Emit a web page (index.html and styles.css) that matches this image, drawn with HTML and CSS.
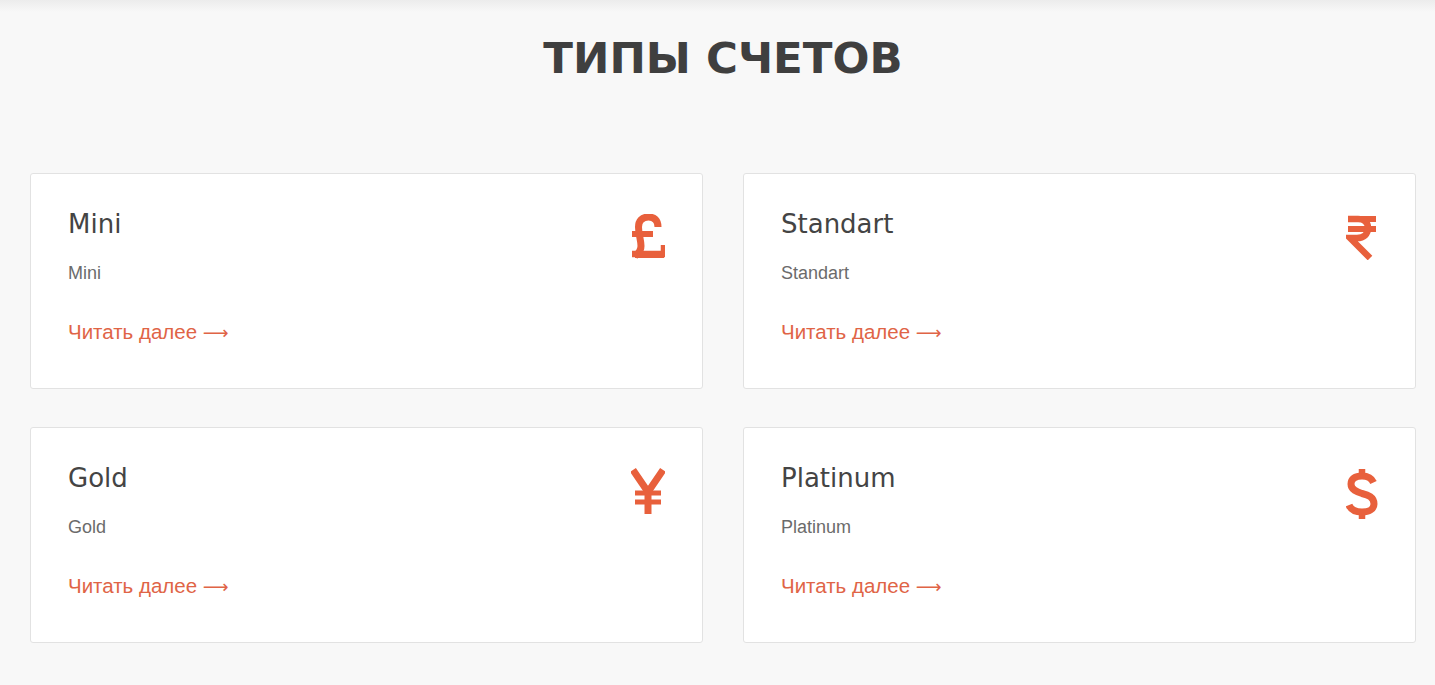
FILE: index.html
```html
<!DOCTYPE html>
<html lang="ru">
<head>
    <meta charset="UTF-8" />
    <meta name="viewport" content="width=device-width, initial-scale=1.0"/>
    <title>Типы счетов</title>
    <link rel="stylesheet" href="styles.css">
</head>
<body>
<div class="topbar"></div>
<section class="accounts">
    <h2 class="section-title">ТИПЫ СЧЕТОВ</h2>

    <div class="grid">
        <!-- Mini -->
        <div class="card">
            <div class="card-body">
                <h3>Mini</h3>
                <p>Mini</p>
                <a href="#">Читать далее <span class="arrow">⟶</span></a>
            </div>
            <svg class="icon" width="34" height="46" viewBox="0 0 34 46">
                <path d="M27 13 C27 6 23 3 17.5 3 C11 3 7.5 7 7.5 13 C7.5 20 10 26 10 32 C10 36 8 39 4 42" fill="none" stroke="currentColor" stroke-width="7"/>
                <path d="M1 20 H22" stroke="currentColor" stroke-width="6"/>
                <path d="M1 40 H33 V31" fill="none" stroke="currentColor" stroke-width="6.5"/>
                <path d="M4 42 H33" stroke="currentColor" stroke-width="4"/>
            </svg>
        </div>

        <!-- Standart -->
        <div class="card">
            <div class="card-body">
                <h3>Standart</h3>
                <p>Standart</p>
                <a href="#">Читать далее <span class="arrow">⟶</span></a>
            </div>
            <svg class="icon" width="32" height="46" viewBox="0 0 32 46">
                <path d="M2 5 H30 M2 15 H30" stroke="currentColor" stroke-width="6"/>
                <path d="M2 5 H12 C19 5 22 9 22 14 C22 20 18 24 11 24 H4 L24 44" fill="none" stroke="currentColor" stroke-width="6.5"/>
            </svg>
        </div>

        <!-- Gold -->
        <div class="card">
            <div class="card-body">
                <h3>Gold</h3>
                <p>Gold</p>
                <a href="#">Читать далее <span class="arrow">⟶</span></a>
            </div>
            <svg class="icon" width="34" height="46" viewBox="0 0 34 46">
                <path d="M2 2 L17 24 L32 2" fill="none" stroke="currentColor" stroke-width="7"/>
                <path d="M17 22 V46" stroke="currentColor" stroke-width="7"/>
                <path d="M4 25 H30 M4 34 H30" stroke="currentColor" stroke-width="5"/>
            </svg>
        </div>

        <!-- Platinum -->
        <div class="card">
            <div class="card-body">
                <h3>Platinum</h3>
                <p>Platinum</p>
                <a href="#">Читать далее <span class="arrow">⟶</span></a>
            </div>
            <svg class="icon" width="32" height="52" viewBox="0 0 32 52">
                <path d="M27.5 14.5 C25.5 10 21.5 8 16 8 C9 8 5 11 5 16 C5 22 11 24 16 25.5 C22 27 28 29 28 36 C28 41 23 44 16 44 C10 44 5 42 3 37" fill="none" stroke="currentColor" stroke-width="7"/>
                <path d="M16 1 V10 M16 42 V51" stroke="currentColor" stroke-width="6.5"/>
            </svg>
        </div>
    </div>
</section>
</body>
</html>
```

FILE: styles.css
```css
/* типы счетов */
body{background:#f8f8f8;margin:0;font-family:"Liberation Sans",Arial,sans-serif;color:#444;}
.topbar{height:12px;background:linear-gradient(#ececec,#f8f8f8);}
.accounts{padding:0 19px 40px 30px;}
.section-title{margin:22px 0 0;text-align:center;font-family:"DejaVu Sans",sans-serif;font-weight:700;font-size:43.5px;color:#3f3f3f;line-height:48px;}
.grid{display:grid;grid-template-columns:1fr 1fr;column-gap:40px;row-gap:38px;margin-top:91px;}
.card{display:flex;justify-content:space-between;align-items:flex-start;background:#fff;border:1px solid #e2e2e2;border-radius:3px;height:214px;padding:0 37px 0 37px;}
.card h3{margin:35px 0 0;font-family:"DejaVu Sans",sans-serif;font-weight:400;font-size:26px;line-height:30px;color:#444;}
.card p{margin:23px 0 0;font-size:18px;color:#6b6b6b;line-height:22px;}
.card a{display:inline-block;margin-top:36px;font-size:20.5px;color:#e06446;text-decoration:none;line-height:24px;}
.arrow{font-family:"DejaVu Sans",sans-serif;font-size:18px;}
.icon{margin-top:40px;color:#e8603c;flex:none;}
```
